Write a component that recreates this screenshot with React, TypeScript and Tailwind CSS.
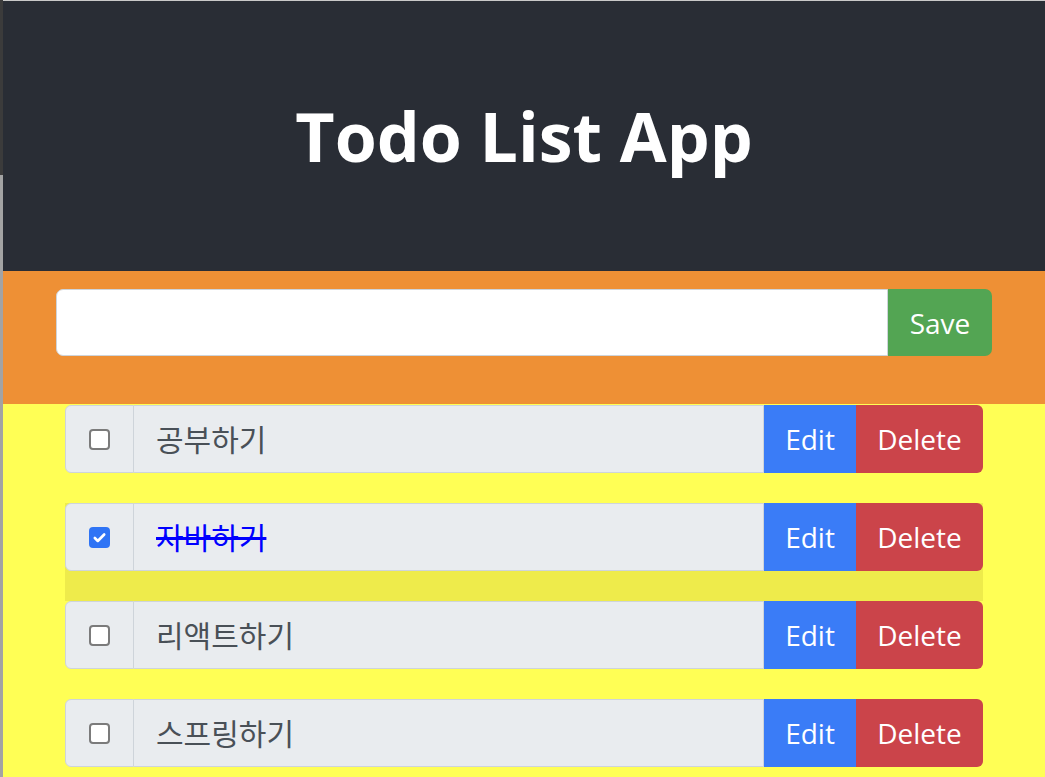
import { useState } from 'react';

type Todo = { id: number; title: string; completed: boolean };

const initialTodos: Todo[] = [
  { id: 1, title: '공부하기', completed: false },
  { id: 2, title: '자바하기', completed: true },
  { id: 3, title: '리액트하기', completed: false },
  { id: 4, title: '스프링하기', completed: false },
];

const font = { fontFamily: '"Open Sans", "Noto Sans CJK KR", sans-serif' };

const CheckBox = ({ checked, onChange }: { checked: boolean; onChange: () => void }) => (
  <button
    type="button"
    onClick={onChange}
    className={`w-[21px] h-[21px] shrink-0 rounded-[4px] flex items-center justify-center ${
      checked ? 'bg-[#2f74f5] border-0' : 'bg-white border-2 border-[#7b7b7b]'
    }`}
  >
    {checked && (
      <svg width="15" height="15" viewBox="0 0 16 16" fill="none">
        <path d="M3 8.5l3.2 3.2L13 4.8" stroke="white" strokeWidth="2.8" strokeLinecap="round" strokeLinejoin="round" />
      </svg>
    )}
  </button>
);

const TodoItem = ({ todo, hovered, onToggle, onDelete }: {
  todo: Todo;
  hovered: boolean;
  onToggle: () => void;
  onDelete: () => void;
}) => (
  <div className={`shrink-0 pb-[30px] ${hovered ? 'bg-[#eeeb4b]' : ''}`}>
    <div className="flex h-[68px] text-[28px]">
      <div className="w-[69px] flex items-center justify-center bg-[#e9ecef] border border-[#ced4da] rounded-l-[6px]">
        <CheckBox checked={todo.completed} onChange={onToggle} />
      </div>
      <div
        className={`flex-1 flex items-center pl-[22px] text-[30px] bg-[#e9ecef] border border-l-0 border-[#ced4da] ${
          todo.completed ? 'line-through text-[#0000ff]' : 'text-[#495057]'
        }`}
      >
        {todo.title}
      </div>
      <button type="button" className="w-[92px] bg-[#3a7cf7] text-white">Edit</button>
      <button type="button" onClick={onDelete} className="w-[127px] bg-[#cb444a] text-white rounded-r-[6px]">
        Delete
      </button>
    </div>
  </div>
);

export default function App() {
  const [todos, setTodos] = useState<Todo[]>(initialTodos);
  const [value, setValue] = useState('');

  const save = () => {
    if (!value.trim()) return;
    setTodos([...todos, { id: Date.now(), title: value, completed: false }]);
    setValue('');
  };

  return (
    <div className="flex h-[777px] overflow-hidden" style={font}>
      <div className="w-[3px] shrink-0 flex flex-col">
        <div className="h-[175px] bg-[#3b3b3b]" />
        <div className="flex-1 bg-[#a3a3a3]" />
      </div>
      <div className="flex-1 flex flex-col border-t border-[#c9c9c9] min-h-0">
        <header className="h-[270px] shrink-0 bg-[#292d35] flex items-center justify-center">
          <h1 className="text-[68px] font-bold text-white">Todo List App</h1>
        </header>

        <div className="shrink-0 bg-[#ee9035] pt-[18px] pb-[48px] px-[53px]">
          <div className="flex h-[67px] text-[28px]">
            <input
              value={value}
              onChange={(e) => setValue(e.target.value)}
              className="flex-1 bg-white border border-[#ced4da] rounded-l-[7px] px-[22px] outline-none"
            />
            <button type="button" onClick={save} className="w-[104px] bg-[#53a553] text-white rounded-r-[7px]">
              Save
            </button>
          </div>
        </div>

        <div className="flex-1 min-h-0 overflow-hidden bg-[#ffff55] px-[62px] pt-[1px]">
          {todos.map((todo) => (
            <TodoItem
              key={todo.id}
              todo={todo}
              hovered={todo.id === 2}
              onToggle={() =>
                setTodos(todos.map((t) => (t.id === todo.id ? { ...t, completed: !t.completed } : t)))
              }
              onDelete={() => setTodos(todos.filter((t) => t.id !== todo.id))}
            />
          ))}
        </div>
      </div>
    </div>
  );
}
